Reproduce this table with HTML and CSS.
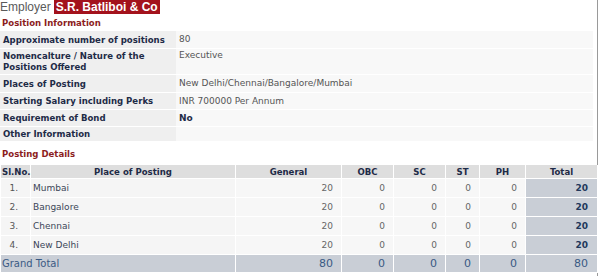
FILE: index.html
```html
<!DOCTYPE html>
<html>
<head>
<meta charset="utf-8">
<link rel="stylesheet" href="styles.css">
</head>
<body>
<div class="page">
  <div class="employer">
    <span class="emp-label">Employer</span>
    <span class="emp-name">S.R. Batliboi &amp; Co</span>
  </div>
  <div class="section-title">Position Information</div>
  <table class="info">
    <tr><th>Approximate number of positions</th><td>80</td></tr>
    <tr class="two"><th>Nomencalture / Nature of the Positions Offered</th><td>Executive</td></tr>
    <tr class="r18"><th>Places of Posting</th><td>New Delhi/Chennai/Bangalore/Mumbai</td></tr>
    <tr><th>Starting Salary including Perks</th><td>INR 700000 Per Annum</td></tr>
    <tr><th>Requirement of Bond</th><td class="bold">No</td></tr>
    <tr class="r15"><th>Other Information</th><td></td></tr>
  </table>
  <div class="section-title posting-title">Posting Details</div>
  <table class="posting">
    <colgroup>
      <col class="c-sl"><col class="c-place"><col class="c-gen"><col class="c-obc"><col class="c-sc"><col class="c-st"><col class="c-ph"><col class="c-tot">
    </colgroup>
    <thead>
      <tr><th>Sl.No.</th><th>Place of Posting</th><th>General</th><th>OBC</th><th>SC</th><th>ST</th><th>PH</th><th>Total</th></tr>
    </thead>
    <tbody>
      <tr><td class="sl">1.</td><td class="place">Mumbai</td><td class="num">20</td><td class="num">0</td><td class="num">0</td><td class="num">0</td><td class="num">0</td><td class="tot">20</td></tr>
      <tr><td class="sl">2.</td><td class="place">Bangalore</td><td class="num">20</td><td class="num">0</td><td class="num">0</td><td class="num">0</td><td class="num">0</td><td class="tot">20</td></tr>
      <tr><td class="sl">3.</td><td class="place">Chennai</td><td class="num">20</td><td class="num">0</td><td class="num">0</td><td class="num">0</td><td class="num">0</td><td class="tot">20</td></tr>
      <tr><td class="sl">4.</td><td class="place">New Delhi</td><td class="num">20</td><td class="num">0</td><td class="num">0</td><td class="num">0</td><td class="num">0</td><td class="tot">20</td></tr>
    </tbody>
    <tfoot>
      <tr><td colspan="2" class="gt-label">Grand Total</td><td class="gt">80</td><td class="gt">0</td><td class="gt">0</td><td class="gt">0</td><td class="gt">0</td><td class="gt gt-tot">80</td></tr>
    </tfoot>
  </table>
</div>
</body>
</html>
```
FILE: styles.css
```css
html, body {
  margin: 0;
  padding: 0;
  background: #fff;
}
.page {
  width: 597px;
  height: 276px;
  border-right: 1px solid #9a9a9a;
  font-family: "DejaVu Sans", Verdana, sans-serif;
  font-size: 9px;
  color: #444;
}
.employer {
  display: flex;
  align-items: center;
  height: 14px;
  font-family: "Liberation Sans", Arial, sans-serif;
  font-size: 12px;
}
.emp-label {
  color: #5a5a5a;
  padding-right: 3px;
}
.emp-name {
  background: #a3121c;
  color: #fff;
  font-weight: bold;
  padding: 0 2px;
  line-height: 14px;
}
.section-title {
  color: #8c1d1d;
  font-family: "DejaVu Sans Condensed", "DejaVu Sans", sans-serif;
  font-weight: bold;
  font-size: 9.5px;
  line-height: 12px;
  padding: 3px 0 0 2px;
  height: 14px;
}
.info {
  width: 593px;
  border-collapse: collapse;
}
.info tr { height: 17px; }
.info tr.two { height: 26px; }
.info tr.r18 { height: 18px; }
.info tr.r15 { height: 15px; }
.info th, .info td {
  border-bottom: 1px solid #fff;
  padding: 0 3px;
  text-align: left;
  vertical-align: middle;
}
.info th {
  width: 170px;
  background: #efefef;
  color: #1e2b47;
  font-family: "DejaVu Sans Condensed", "DejaVu Sans", sans-serif;
  font-weight: bold;
  font-size: 9.5px;
  line-height: 11px;
}
.info td {
  background: #f8f8f8;
  color: #555;
}
.info tr.two th, .info tr.two td {
  vertical-align: top;
  padding-top: 1px;
}
.info td.bold {
  font-weight: bold;
  color: #1e2b47;
}
.posting-title {
  padding-top: 6px;
  height: 17px;
}
.posting {
  width: 597px;
  border-collapse: collapse;
  table-layout: fixed;
}
.c-sl { width: 30px; }
.c-place { width: 205px; }
.c-gen { width: 106px; }
.c-obc { width: 52px; }
.c-sc { width: 52px; }
.c-st { width: 34px; }
.c-ph { width: 46px; }
.c-tot { width: 72px; }
.posting thead tr { height: 14px; }
.posting th {
  background: #dedede;
  color: #1e2b47;
  font-family: "DejaVu Sans Condensed", "DejaVu Sans", sans-serif;
  font-weight: bold;
  font-size: 9.5px;
  padding: 0;
  border: 1px solid #fff;
  border-top: none;
  text-align: center;
}
.posting th:first-child { text-align: left; padding-left: 1px; }
.posting tbody tr { height: 19px; }
.posting td {
  padding: 0 8px;
  border: 1px solid #fff;
  background: #f5f5f5;
  color: #666;
}
.posting td.sl { text-align: right; color: #555; padding-right: 12px; }
.posting td.place { color: #3b4658; padding-left: 2px; }
.posting td.num { text-align: right; background: #f7f7f7; }
.posting td.tot {
  text-align: right;
  background: #c9ced6;
  color: #22385c;
  font-weight: bold;
  padding-right: 9px;
}
.posting tfoot tr { height: 18px; }
.posting tfoot td {
  background: #c9ced6;
  color: #3a5a84;
  font-size: 11px;
}
.posting td.gt-label { text-align: left; padding-left: 1px; font-size: 10px; }
.posting td.gt { text-align: right; }
.posting td.gt-tot { padding-right: 9px; }
```
